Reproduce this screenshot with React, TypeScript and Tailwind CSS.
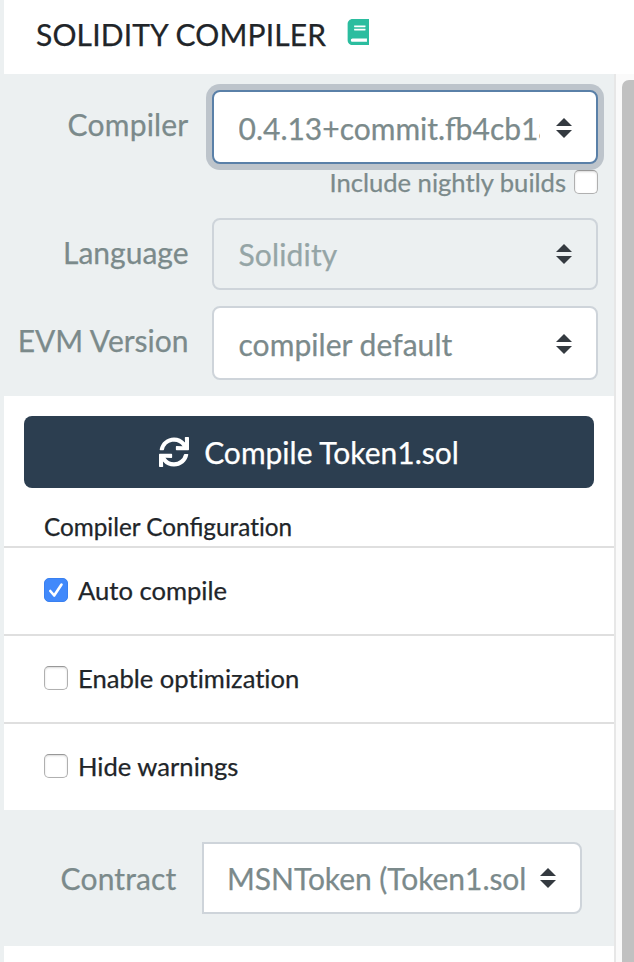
import type { ReactNode } from "react";
import { FaBook, FaSync } from "react-icons/fa";

function Carets({ className = "" }: { className?: string }) {
  return (
    <svg viewBox="0 0 4 5" className={`h-5 w-4 shrink-0 ${className}`} fill="#343a40">
      <path d="M2 0L0 2h4zm0 5L0 3h4z" />
    </svg>
  );
}

function Select({ className, textClass, caretClass, children }: { className: string; textClass: string; caretClass?: string; children: ReactNode }) {
  return (
    <div className={`flex shrink-0 items-center border-2 pr-6 ${className}`}>
      <span className={`flex-1 overflow-hidden whitespace-nowrap text-[30px] leading-[40px] ${textClass}`}>{children}</span>
      <Carets className={caretClass} />
    </div>
  );
}

function Checkbox({ checked = false }: { checked?: boolean }) {
  if (checked) {
    return (
      <span className="flex size-6 shrink-0 items-center justify-center rounded-[5px] border border-[#3a80f0] bg-[#4189fb]">
        <svg viewBox="0 0 24 24" className="size-6 shrink-0" fill="none" stroke="white" strokeWidth="2.6" strokeLinecap="round" strokeLinejoin="round">
          <path d="M6.3 13L10.2 17.5L17.5 6.5" />
        </svg>
      </span>
    );
  }
  return <span className="size-6 shrink-0 rounded-[5px] border border-[#b0b0b0] border-t-[#989898] bg-white shadow-[inset_0_1px_2px_rgba(0,0,0,0.15)]" />;
}

function Option({ label, checked, last }: { label: string; checked?: boolean; last?: boolean }) {
  return (
    <div className={`flex shrink-0 items-center pb-0.5 pl-10 ${last ? "h-[86px]" : "h-[88px] border-b-2 border-[#dfdfdf]"}`}>
      <Checkbox checked={checked} />
      <span className="mb-px ml-2.5 text-[25.6px] leading-8 [font-variant-ligatures:none]">{label}</span>
    </div>
  );
}

export default function App() {
  return (
    <div className="flex h-[962px] w-[634px] flex-col overflow-hidden border-l-4 border-[#ecf0f1] bg-white font-['Lato',sans-serif] text-[#212529] [-webkit-text-stroke:0.25px]">
      <header className="flex h-[74px] shrink-0 items-start pl-8">
        <h1 className="mt-[14px] w-[290px] whitespace-nowrap text-[30px] leading-10 tracking-[0.15px]">SOLIDITY COMPILER</h1>
        <span className="ml-[19.5px] mt-[19px] w-[23px] overflow-hidden text-[#2bbd9f]">
          <FaBook size={26} />
        </span>
      </header>
      <div className="flex min-h-0 flex-1">
        <main className="flex w-[610px] shrink-0 flex-col">
          <section className="flex h-[322px] shrink-0 flex-col bg-[#ecf0f1] pr-4 pt-4 text-[#7b8a8b]">
            <div className="flex h-[74px] items-center">
              <label className="mb-1.5 mr-[23.5px] w-[184.5px] shrink-0 text-right text-[30px] leading-10 tracking-[0.2px]">Compiler</label>
              <Select className="h-[74px] w-[386px] rounded-lg border-[#5a80a8] bg-white pl-[24.5px] shadow-[0_0_0_6px_#bdc4cb]" textClass="mt-0.5 mr-4" caretClass="mt-0.5">
                0.4.13+commit.fb4cb1a
              </Select>
            </div>
            <div className="flex h-[38px] items-center justify-end pb-0.5">
              <span className="mr-2 text-[25.6px] leading-8">Include nightly builds</span>
              <Checkbox />
            </div>
            <div className="mt-4 flex h-[72px] items-center">
              <label className="mb-1 mr-[23.5px] w-[184.5px] shrink-0 text-right text-[30px] leading-10">Language</label>
              <Select className="h-[72px] w-[386px] rounded-lg border-[#ced4da] pl-[24.5px]" textClass="mr-4 tracking-[0.15px] text-[#95a5a6]">Solidity</Select>
            </div>
            <div className="mt-4 flex h-[74px] items-center">
              <label className="mb-1.5 mr-[23.5px] w-[184.5px] shrink-0 text-right text-[30px] leading-10">EVM Version</label>
              <Select className="h-[74px] w-[386px] rounded-lg border-[#ced4da] bg-white pl-[24.5px]" textClass="mt-0.5 mr-4 tracking-[0.05px]" caretClass="mt-0.5">compiler default</Select>
            </div>
          </section>
          <section className="flex h-[414px] shrink-0 flex-col pt-5">
            <button className="mx-5 flex h-[72px] w-[570px] shrink-0 items-center justify-center rounded-lg bg-[#2c3e50] text-[30px] leading-10 text-white">
              <FaSync size={30} className="mr-[15px]" />
              <span>Compile Token1.sol</span>
            </button>
            <div className="flex h-[60px] shrink-0 items-end border-b-2 border-[#dfdfdf] pb-px pl-10 text-[24.3px] leading-9">
              <span>Compiler Configura<span className="[font-variant-ligatures:none]">tion</span></span>
            </div>
            <Option label="Auto compile" checked />
            <Option label="Enable optimization" />
            <Option label="Hide warnings" last />
          </section>
          <section className="flex h-[136px] shrink-0 items-center bg-[#ecf0f1] text-[#7b8a8b]">
            <label className="mr-[25.5px] w-[172.5px] shrink-0 text-right text-[30px] leading-10 tracking-[0.15px]">Contract</label>
            <Select className="h-[72px] w-[380px] rounded-r-lg border-[#ced4da] bg-white pl-[23px]" textClass="mr-[13px] tracking-[-0.05px]">MSNToken (Token1.sol</Select>
          </section>
        </main>
        <aside className="flex flex-1 border-l-2 border-[#e7e7e7] bg-[#fafafa] pl-1.5 pt-1.5">
          <div className="flex-1 rounded-tl-[7px] bg-[#c1c1c1]" />
        </aside>
      </div>
    </div>
  );
}
